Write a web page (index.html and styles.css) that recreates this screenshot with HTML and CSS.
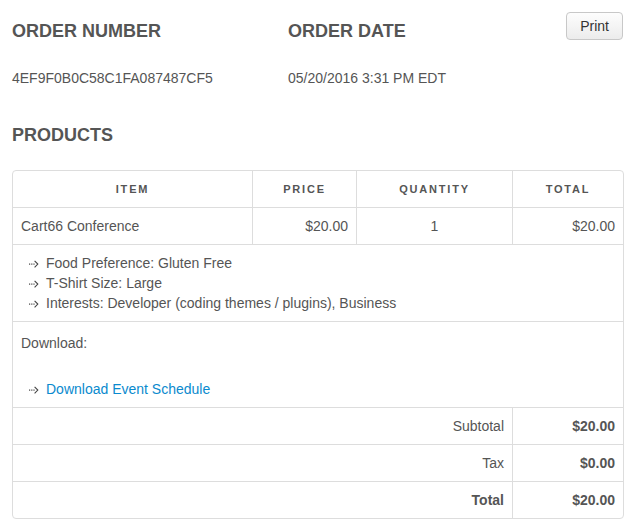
FILE: index.html
```html
<!DOCTYPE html>
<html lang="en">
<head>
  <meta charset="UTF-8" />
  <meta name="viewport" content="width=device-width, initial-scale=1.0"/>
  <title>Order Receipt</title>
  <link rel="stylesheet" href="styles.css">
</head>
<body>
  <!-- Order info -->
  <div class="order-head">
    <div class="order-col">
      <h2>ORDER NUMBER</h2>
      <p class="order-value">4EF9F0B0C58C1FA087487CF5</p>
    </div>
    <div class="order-col">
      <h2>ORDER DATE</h2>
      <p class="order-value">05/20/2016 3:31 PM EDT</p>
    </div>
    <button class="print-btn" onclick="window.print()">Print</button>
  </div>

  <!-- Products -->
  <h2 class="products-title">PRODUCTS</h2>
  <table class="products">
    <colgroup>
      <col style="width: 239px">
      <col style="width: 104px">
      <col style="width: 156px">
      <col style="width: 111px">
    </colgroup>
    <thead>
      <tr>
        <th>Item</th>
        <th>Price</th>
        <th>Quantity</th>
        <th>Total</th>
      </tr>
    </thead>
    <tbody>
      <tr>
        <td>Cart66 Conference</td>
        <td class="right">$20.00</td>
        <td class="center">1</td>
        <td class="right">$20.00</td>
      </tr>
      <tr>
        <td colspan="4">
          <ul class="details">
            <li>Food Preference: Gluten Free</li>
            <li>T-Shirt Size: Large</li>
            <li>Interests: Developer (coding themes / plugins), Business</li>
          </ul>
        </td>
      </tr>
      <tr>
        <td colspan="4" class="download-cell">
          <p>Download:</p>
          <ul class="details downloads">
            <li><a href="#">Download Event Schedule</a></li>
          </ul>
        </td>
      </tr>
      <tr>
        <td colspan="3" class="right">Subtotal</td>
        <td class="right strong">$20.00</td>
      </tr>
      <tr>
        <td colspan="3" class="right">Tax</td>
        <td class="right strong">$0.00</td>
      </tr>
      <tr>
        <td colspan="3" class="right strong">Total</td>
        <td class="right strong">$20.00</td>
      </tr>
    </tbody>
  </table>
</body>
</html>
```
FILE: styles.css
```css
* {
  margin: 0;
  padding: 0;
  box-sizing: border-box;
}
body {
  padding: 12px;
  font-family: "Liberation Sans", Arial, sans-serif;
  font-size: 14px;
  line-height: 20px;
  color: #555;
  background: #fff;
}
h2 {
  font-size: 18px;
  line-height: 22px;
  font-weight: bold;
  color: #555;
}
.order-head {
  display: flex;
  align-items: flex-start;
}
.order-col {
  width: 276px;
}
.order-col h2 {
  margin-top: 8px;
}
.order-value {
  margin-top: 26px;
}
.print-btn {
  margin-left: auto;
  margin-right: 3px;
  height: 28px;
  padding: 0 13px;
  font-family: "Liberation Sans", Arial, sans-serif;
  font-size: 14px;
  color: #333;
  background: linear-gradient(#fdfdfd, #ececec);
  border: 1px solid #c8c8c8;
  border-radius: 4px;
  cursor: pointer;
}
.products-title {
  margin-top: 36px;
}
.products {
  width: 612px;
  margin-top: 24px;
  table-layout: fixed;
  border-collapse: separate;
  border-spacing: 0;
  border: 1px solid #ddd;
  border-radius: 4px;
}
.products th,
.products td {
  padding: 8px;
  border-top: 1px solid #ddd;
  border-left: 1px solid #ddd;
  text-align: left;
  vertical-align: top;
}
.products tr > :first-child {
  border-left: none;
}
.products thead tr:first-child th {
  border-top: none;
}
.products th {
  text-align: center;
  font-size: 11px;
  letter-spacing: 1.8px;
  text-transform: uppercase;
  font-weight: bold;
  color: #555;
}
.products td.right {
  text-align: right;
}
.products td.center {
  text-align: center;
}
.strong {
  font-weight: bold;
}
/* option list with a dotted arrow bullet */
.details {
  list-style: none;
  padding-left: 8px;
}
.details li {
  height: 20px;
}
.details li::before {
  content: "";
  display: inline-block;
  width: 17px;
  height: 20px;
  vertical-align: top;
  background: url("data:image/svg+xml,%3Csvg xmlns='http://www.w3.org/2000/svg' width='10' height='8' viewBox='0 0 10 8'%3E%3Cg fill='%23444'%3E%3Crect x='0' y='3.5' width='1.2' height='1.2'/%3E%3Crect x='2.2' y='3.5' width='1.2' height='1.2'/%3E%3Crect x='4.4' y='3.5' width='1.2' height='1.2'/%3E%3C/g%3E%3Cpath d='M5.6 0.8 L8.8 4.1 L5.6 7.4' fill='none' stroke='%23444' stroke-width='1.1'/%3E%3C/svg%3E") no-repeat 0 7px;
}
.products td.download-cell {
  padding-top: 11px;
}
.downloads {
  margin-top: 26px;
}
.downloads a {
  color: #0a8ace;
  text-decoration: none;
}
```
